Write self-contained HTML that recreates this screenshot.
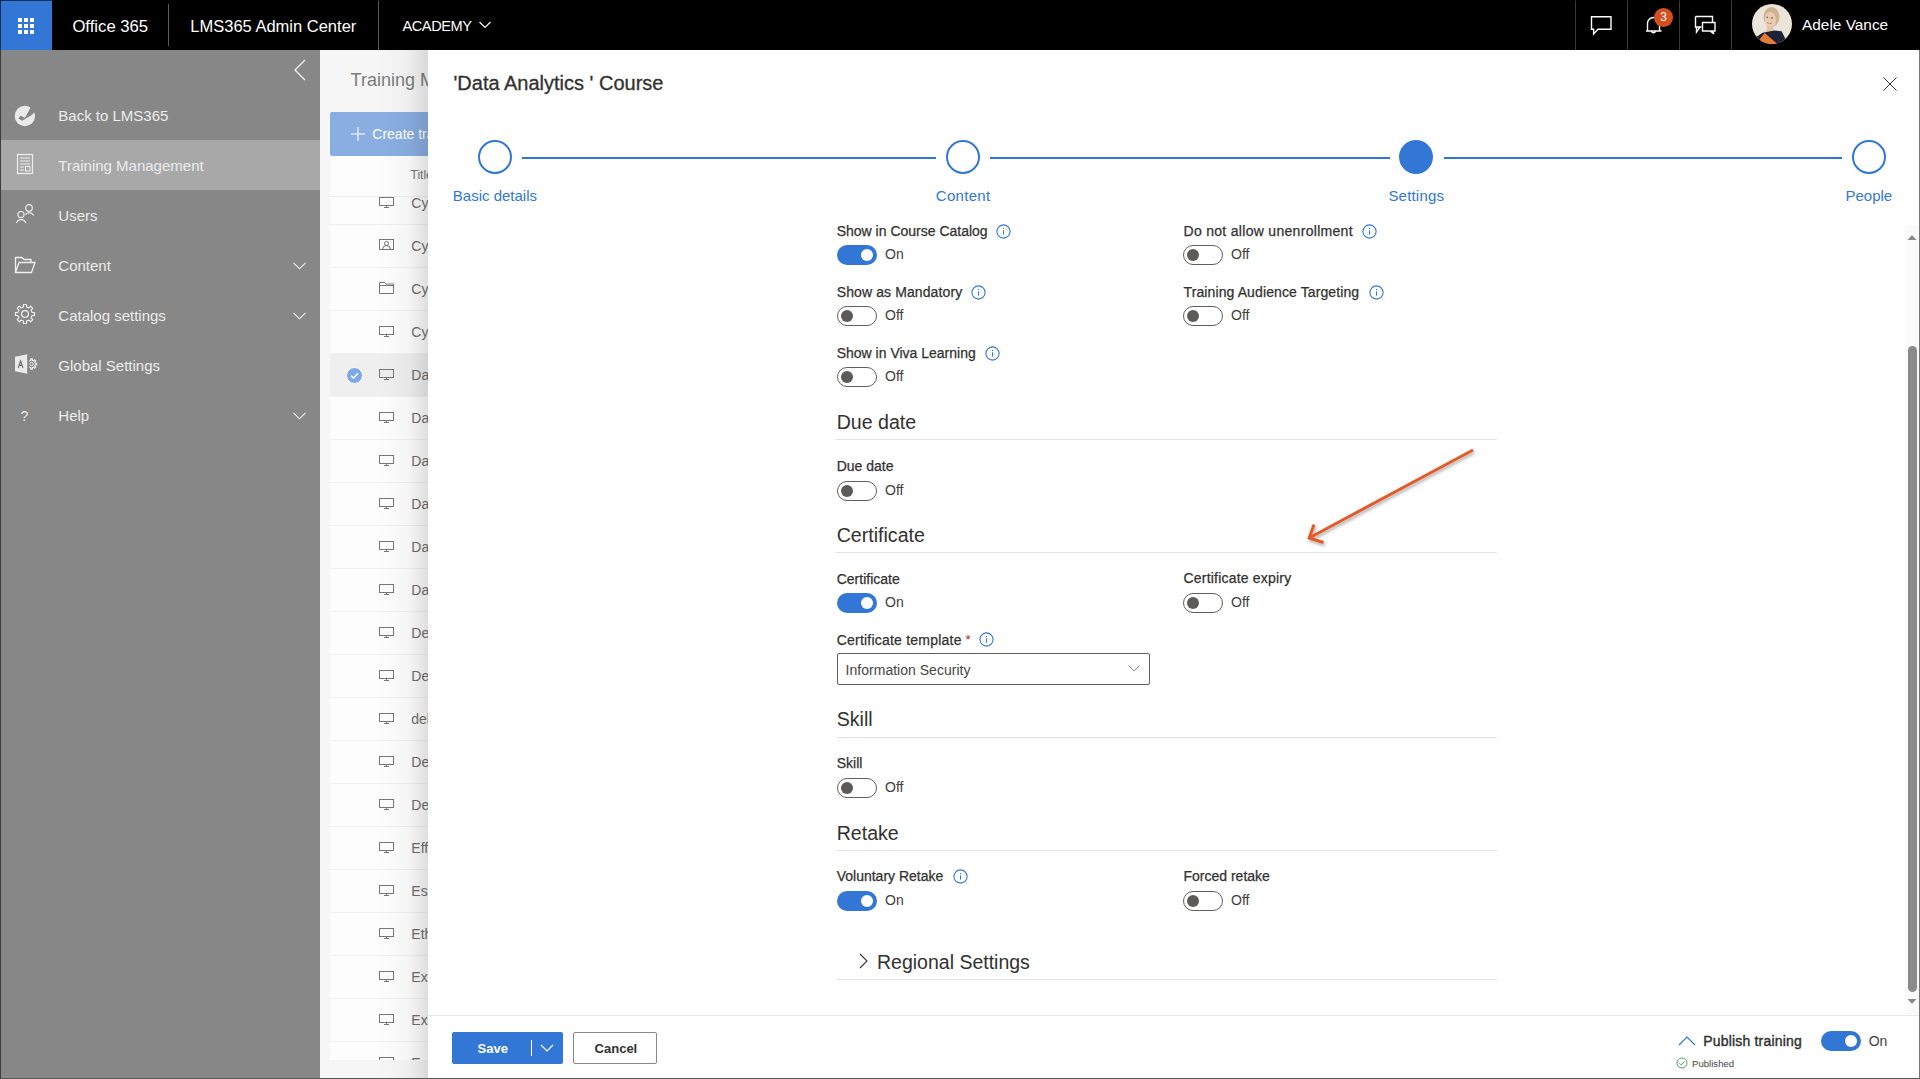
<!DOCTYPE html>
<html><head><meta charset="utf-8"><style>
html,body{margin:0;padding:0;width:1920px;height:1079px;overflow:hidden;background:#fff}
body{position:relative;font-family:"Liberation Sans",sans-serif}
.t{position:absolute;white-space:nowrap;line-height:1;font-family:"Liberation Sans",sans-serif}
</style></head><body>
<div style="position:absolute;left:0px;top:0px;width:1920px;height:50px;background:#000"></div>
<div style="position:absolute;left:0px;top:0px;width:52px;height:50px;background:#3277d5"></div>
<div style="position:absolute;left:18px;top:18px;width:4px;height:4px;background:#fff"></div>
<div style="position:absolute;left:18px;top:24px;width:4px;height:4px;background:#fff"></div>
<div style="position:absolute;left:18px;top:30px;width:4px;height:4px;background:#fff"></div>
<div style="position:absolute;left:24px;top:18px;width:4px;height:4px;background:#fff"></div>
<div style="position:absolute;left:24px;top:24px;width:4px;height:4px;background:#fff"></div>
<div style="position:absolute;left:24px;top:30px;width:4px;height:4px;background:#fff"></div>
<div style="position:absolute;left:30px;top:18px;width:4px;height:4px;background:#fff"></div>
<div style="position:absolute;left:30px;top:24px;width:4px;height:4px;background:#fff"></div>
<div style="position:absolute;left:30px;top:30px;width:4px;height:4px;background:#fff"></div>
<div class="t" style="left:72.4px;top:18.86px;font-size:16.7px;color:#fff;font-weight:normal;">Office 365</div>
<div style="position:absolute;left:168px;top:4px;width:1px;height:42px;background:#5a5a5a"></div>
<div class="t" style="left:190.3px;top:17.93px;font-size:16.5px;color:#fff;font-weight:normal;">LMS365 Admin Center</div>
<div style="position:absolute;left:378px;top:0px;width:1px;height:50px;background:#5a5a5a"></div>
<div class="t" style="left:402.5px;top:18.64px;font-size:14.6px;color:#fff;font-weight:normal;letter-spacing:-0.45px">ACADEMY</div>
<svg style="position:absolute;left:478px;top:20px" width="14" height="10"><path d="M1.5 2 L7 7.5 L12.5 2" stroke="#fff" stroke-width="1.1" fill="none"/></svg>
<div style="position:absolute;left:1575px;top:0px;width:1px;height:50px;background:#3a3a3a"></div>
<div style="position:absolute;left:1627px;top:0px;width:1px;height:50px;background:#3a3a3a"></div>
<div style="position:absolute;left:1679px;top:0px;width:1px;height:50px;background:#3a3a3a"></div>
<div style="position:absolute;left:1731px;top:0px;width:1px;height:50px;background:#3a3a3a"></div>
<svg style="position:absolute;left:1588px;top:14px" width="28" height="24"><path d="M3.5 2.7 H23 V15.3 H10 L5.6 20 V15.3 H3.5 Z" stroke="#fff" stroke-width="1.4" fill="none" stroke-linejoin="miter"/></svg>
<svg style="position:absolute;left:1643px;top:14px" width="22" height="22"><path d="M3 17 H18.5 M4.5 17 V9.5 A6 6 0 0 1 16.5 9.5 V17 M8.5 17.5 A2.2 2.2 0 0 0 12.5 17.5" stroke="#fff" stroke-width="1.4" fill="none"/></svg>
<div style="position:absolute;left:1654px;top:7.5px;width:19px;height:19px;border-radius:50%;background:#d4501f;color:#fff;font-size:12px;line-height:19px;text-align:center;font-family:Liberation Sans,sans-serif">3</div>
<svg style="position:absolute;left:1692px;top:14px" width="28" height="24"><path d="M3.5 2.5 H20.5 V8.5 M9.5 13 H3.5 V2.5 M4.5 13 V18 L8 13" stroke="#fff" stroke-width="1.4" fill="none"/><path d="M10.5 8.5 H23 V17 H20 L22 20 L18 17 H10.5 Z" stroke="#fff" stroke-width="1.4" fill="none"/></svg>
<svg style="position:absolute;left:1752px;top:4px" width="40" height="40" viewBox="0 0 40 40">
<defs><clipPath id="av"><circle cx="20" cy="20" r="20"/></clipPath><filter id="bl"><feGaussianBlur stdDeviation="0.6"/></filter></defs>
<g clip-path="url(#av)">
<rect width="40" height="40" fill="#ebe5d9"/>
<g filter="url(#bl)">
<ellipse cx="19.5" cy="13" rx="8" ry="10" fill="#cdb48e"/>
<ellipse cx="18.3" cy="16" rx="5.6" ry="8" fill="#ebccb3"/>
<path d="M15 22 L21 22 L22 28 L14 29 Z" fill="#e5c4a8"/>
<circle cx="15.2" cy="13.3" r="0.9" fill="#8a6a55"/><circle cx="20" cy="14" r="0.9" fill="#8a6a55"/><path d="M15 18.6 Q17.5 20.5 20 18.8" stroke="#b08070" stroke-width="1" fill="#f4eee8"/>
<path d="M2 40 L4.7 32.7 L10.5 28.7 L22.5 26.5 L29.6 27.3 L33.5 35 L32 40 Z" fill="#1e2235"/>
<path d="M7.8 34.9 L12.7 29.1 L24.3 38.9 L22.5 41 L9 38 Z" fill="#e97a34"/>
</g>
</g></svg>
<div class="t" style="left:1802.0px;top:17.46px;font-size:15.4px;color:#fff;font-weight:normal;">Adele Vance</div>
<div style="position:absolute;left:0px;top:50px;width:320px;height:1029px;background:#878787"></div>
<div style="position:absolute;left:0px;top:140px;width:320px;height:50px;background:#a8a8a8"></div>
<div style="position:absolute;left:0px;top:50px;width:1px;height:1029px;background:#3c3c3c"></div>
<svg style="position:absolute;left:292px;top:58px" width="16" height="26"><path d="M13 2 L3 12 L13 22" stroke="#eee" stroke-width="1.4" fill="none"/></svg>
<div class="t" style="left:58.3px;top:107.60px;font-size:15px;color:#ececec;font-weight:normal;">Back to LMS365</div>
<div class="t" style="left:58.3px;top:157.60px;font-size:15px;color:#ececec;font-weight:normal;">Training Management</div>
<div class="t" style="left:58.3px;top:207.60px;font-size:15px;color:#ececec;font-weight:normal;">Users</div>
<div class="t" style="left:58.3px;top:257.60px;font-size:15px;color:#ececec;font-weight:normal;">Content</div>
<div class="t" style="left:58.3px;top:307.60px;font-size:15px;color:#ececec;font-weight:normal;">Catalog settings</div>
<div class="t" style="left:58.3px;top:357.60px;font-size:15px;color:#ececec;font-weight:normal;">Global Settings</div>
<div class="t" style="left:58.3px;top:407.60px;font-size:15px;color:#ececec;font-weight:normal;">Help</div>
<svg style="position:absolute;left:290px;top:259px" width="18" height="12"><path d="M3.5 3.8 L9.5 9.8 L15.5 3.8" stroke="#eee" stroke-width="1.1" fill="none"/></svg>
<svg style="position:absolute;left:290px;top:309px" width="18" height="12"><path d="M3.5 3.8 L9.5 9.8 L15.5 3.8" stroke="#eee" stroke-width="1.1" fill="none"/></svg>
<svg style="position:absolute;left:290px;top:409px" width="18" height="12"><path d="M3.5 3.8 L9.5 9.8 L15.5 3.8" stroke="#eee" stroke-width="1.1" fill="none"/></svg>
<svg style="position:absolute;left:14px;top:105px" width="22" height="22"><circle cx="10.9" cy="11" r="10.2" fill="#eaeaea"/><path d="M4.4 13.4 L6.4 10.8 L11 12.7 L17.3 1.2 L22.5 5.5 L17 10.5 L8.1 15.8 Z" fill="#878787"/></svg>
<svg style="position:absolute;left:16px;top:153px" width="18" height="22"><rect x="1.5" y="1.5" width="15" height="19" stroke="#eee" stroke-width="1.2" fill="none"/><path d="M4 5 H14 M4 8 H14 M4 11 H14 M4 14 H8 M4 17 H8" stroke="#eee" stroke-width="1"/><rect x="9.5" y="13.5" width="4.5" height="4.5" stroke="#eee" stroke-width="1" fill="none"/></svg>
<svg style="position:absolute;left:14px;top:203px" width="22" height="22"><circle cx="15" cy="5" r="3.3" stroke="#eee" stroke-width="1.2" fill="none"/><path d="M11.5 11.5 A5.2 5.2 0 0 1 19.8 12.5" stroke="#eee" stroke-width="1.2" fill="none"/><circle cx="7" cy="11.6" r="3.1" stroke="#eee" stroke-width="1.2" fill="none"/><path d="M2.3 20 A5 5 0 0 1 11.8 20" stroke="#eee" stroke-width="1.2" fill="none"/></svg>
<svg style="position:absolute;left:14px;top:254px" width="22" height="22"><path d="M1.5 18.5 V3.5 H8 L10 5.5 H17 V8.5 M1.5 18.5 L5 8.5 H21 L17.5 18.5 Z" stroke="#eee" stroke-width="1.3" fill="none"/></svg>
<svg style="position:absolute;left:14px;top:303px" width="22" height="22" viewBox="0 0 22 22"><path d="M18.02 9.39 L20.48 9.50 L20.48 12.50 L18.02 12.61 L17.10 14.82 L18.77 16.64 L16.64 18.77 L14.82 17.10 L12.61 18.02 L12.50 20.48 L9.50 20.48 L9.39 18.02 L7.18 17.10 L5.36 18.77 L3.23 16.64 L4.90 14.82 L3.98 12.61 L1.52 12.50 L1.52 9.50 L3.98 9.39 L4.90 7.18 L3.23 5.36 L5.36 3.23 L7.18 4.90 L9.39 3.98 L9.50 1.52 L12.50 1.52 L12.61 3.98 L14.82 4.90 L16.64 3.23 L18.77 5.36 L17.10 7.18 Z" stroke="#eee" stroke-width="1.2" fill="none" stroke-linejoin="round"/><circle cx="11" cy="11" r="3.4" stroke="#eee" stroke-width="1.3" fill="none"/></svg>
<svg style="position:absolute;left:14px;top:353px" width="24" height="22"><path d="M1 3.8 L13.3 1.3 V20.8 L1 18.3 Z" fill="#eaeaea"/><path d="M4.3 15 L6.6 7.8 L8.9 15 M5.2 12.4 H8" stroke="#6a6a6a" stroke-width="1.1" fill="none"/><path d="M21.20 10.15 L22.64 10.19 L22.64 11.81 L21.20 11.85 L20.72 13.02 L21.71 14.06 L20.56 15.21 L19.52 14.22 L18.35 14.70 L18.31 16.14 L16.69 16.14 L16.65 14.70 L15.48 14.22 L14.44 15.21 L13.29 14.06 L14.28 13.02 L13.80 11.85 L12.36 11.81 L12.36 10.19 L13.80 10.15 L14.28 8.98 L13.29 7.94 L14.44 6.79 L15.48 7.78 L16.65 7.30 L16.69 5.86 L18.31 5.86 L18.35 7.30 L19.52 7.78 L20.56 6.79 L21.71 7.94 L20.72 8.98 Z" stroke="#eee" stroke-width="1.1" fill="none"/><circle cx="17.5" cy="11" r="1.7" stroke="#eee" stroke-width="1" fill="none"/><rect x="13.3" y="3" width="2" height="16" fill="#878787"/></svg>
<div class="t" style="left:20.5px;top:408.75px;font-size:14px;color:#ececec;font-weight:normal;">?</div>
<div style="position:absolute;left:320px;top:50px;width:108px;height:1029px;background:#f6f6f6"></div>
<div class="t" style="left:350.6px;top:70.76px;font-size:18px;color:#7b7b7b;font-weight:normal;">Training M</div>
<div style="position:absolute;left:330px;top:112px;width:110px;height:44px;background:#8aaee2;border-radius:2px"></div>
<svg style="position:absolute;left:350px;top:126px" width="16" height="16"><path d="M8 1 V15 M1 8 H15" stroke="#fff" stroke-width="1.1"/></svg>
<div class="t" style="left:372.3px;top:127.15px;font-size:14px;color:#fff;font-weight:normal;">Create training</div>
<div style="position:absolute;left:330px;top:156px;width:110px;height:904px;background:#fdfdfd"></div>
<div class="t" style="left:410.5px;top:169.34px;font-size:12px;color:#7a7a7a;font-weight:normal;">Title</div>
<div style="position:absolute;left:330px;top:196px;width:110px;height:1px;background:#ededed"></div>
<div style="position:absolute;left:330px;top:224px;width:110px;height:1px;background:#efefef"></div>
<div style="position:absolute;left:0;top:0;width:1920px;height:1060px;overflow:hidden">
<svg style="position:absolute;left:378px;top:195px" width="17" height="15"><rect x="1.5" y="2.5" width="14" height="8" stroke="#777" stroke-width="1" fill="none"/><path d="M8.5 10.5 V12 M6 12.5 H11" stroke="#777" stroke-width="1"/></svg>
<div class="t" style="left:411.3px;top:196.15px;font-size:14px;color:#6e6e6e;font-weight:normal;">Cy</div>
<div style="position:absolute;left:330px;top:267px;width:110px;height:1px;background:#f1f1f1"></div>
<svg style="position:absolute;left:378px;top:238px" width="17" height="15"><rect x="1.5" y="1.5" width="14" height="10" stroke="#777" stroke-width="1" fill="none"/><circle cx="8.5" cy="5.5" r="2" stroke="#777" stroke-width="1" fill="none"/><path d="M4.5 11.5 A4 4 0 0 1 12.5 11.5" stroke="#777" stroke-width="1" fill="none"/></svg>
<div class="t" style="left:411.3px;top:239.15px;font-size:14px;color:#6e6e6e;font-weight:normal;">Cy</div>
<div style="position:absolute;left:330px;top:310px;width:110px;height:1px;background:#f1f1f1"></div>
<svg style="position:absolute;left:378px;top:281px" width="17" height="15"><path d="M1.5 12.5 V1.5 H6.5 L8 3 H15.5 V12.5 Z M1.5 4.5 H15.5" stroke="#777" stroke-width="1" fill="none"/></svg>
<div class="t" style="left:411.3px;top:282.15px;font-size:14px;color:#6e6e6e;font-weight:normal;">Cy</div>
<div style="position:absolute;left:330px;top:353px;width:110px;height:1px;background:#f1f1f1"></div>
<svg style="position:absolute;left:378px;top:324px" width="17" height="15"><rect x="1.5" y="2.5" width="14" height="8" stroke="#777" stroke-width="1" fill="none"/><path d="M8.5 10.5 V12 M6 12.5 H11" stroke="#777" stroke-width="1"/></svg>
<div class="t" style="left:411.3px;top:325.15px;font-size:14px;color:#6e6e6e;font-weight:normal;">Cy</div>
<div style="position:absolute;left:330px;top:353px;width:110px;height:43px;background:#efefef"></div>
<svg style="position:absolute;left:346px;top:367px" width="17" height="17"><circle cx="8.5" cy="8.5" r="8" fill="#7fa8e4" stroke="#fff" stroke-width="1"/><path d="M5 8.7 L7.5 11 L12 6.3" stroke="#fff" stroke-width="1.4" fill="none"/></svg>
<div style="position:absolute;left:330px;top:396px;width:110px;height:1px;background:#f1f1f1"></div>
<svg style="position:absolute;left:378px;top:367px" width="17" height="15"><rect x="1.5" y="2.5" width="14" height="8" stroke="#777" stroke-width="1" fill="none"/><path d="M8.5 10.5 V12 M6 12.5 H11" stroke="#777" stroke-width="1"/></svg>
<div class="t" style="left:411.3px;top:368.15px;font-size:14px;color:#6e6e6e;font-weight:normal;">Da</div>
<div style="position:absolute;left:330px;top:439px;width:110px;height:1px;background:#f1f1f1"></div>
<svg style="position:absolute;left:378px;top:410px" width="17" height="15"><rect x="1.5" y="2.5" width="14" height="8" stroke="#777" stroke-width="1" fill="none"/><path d="M8.5 10.5 V12 M6 12.5 H11" stroke="#777" stroke-width="1"/></svg>
<div class="t" style="left:411.3px;top:411.15px;font-size:14px;color:#6e6e6e;font-weight:normal;">Da</div>
<div style="position:absolute;left:330px;top:482px;width:110px;height:1px;background:#f1f1f1"></div>
<svg style="position:absolute;left:378px;top:453px" width="17" height="15"><rect x="1.5" y="2.5" width="14" height="8" stroke="#777" stroke-width="1" fill="none"/><path d="M8.5 10.5 V12 M6 12.5 H11" stroke="#777" stroke-width="1"/></svg>
<div class="t" style="left:411.3px;top:454.15px;font-size:14px;color:#6e6e6e;font-weight:normal;">Da</div>
<div style="position:absolute;left:330px;top:525px;width:110px;height:1px;background:#f1f1f1"></div>
<svg style="position:absolute;left:378px;top:496px" width="17" height="15"><rect x="1.5" y="2.5" width="14" height="8" stroke="#777" stroke-width="1" fill="none"/><path d="M8.5 10.5 V12 M6 12.5 H11" stroke="#777" stroke-width="1"/></svg>
<div class="t" style="left:411.3px;top:497.15px;font-size:14px;color:#6e6e6e;font-weight:normal;">Da</div>
<div style="position:absolute;left:330px;top:568px;width:110px;height:1px;background:#f1f1f1"></div>
<svg style="position:absolute;left:378px;top:539px" width="17" height="15"><rect x="1.5" y="2.5" width="14" height="8" stroke="#777" stroke-width="1" fill="none"/><path d="M8.5 10.5 V12 M6 12.5 H11" stroke="#777" stroke-width="1"/></svg>
<div class="t" style="left:411.3px;top:540.15px;font-size:14px;color:#6e6e6e;font-weight:normal;">Da</div>
<div style="position:absolute;left:330px;top:611px;width:110px;height:1px;background:#f1f1f1"></div>
<svg style="position:absolute;left:378px;top:582px" width="17" height="15"><rect x="1.5" y="2.5" width="14" height="8" stroke="#777" stroke-width="1" fill="none"/><path d="M8.5 10.5 V12 M6 12.5 H11" stroke="#777" stroke-width="1"/></svg>
<div class="t" style="left:411.3px;top:583.15px;font-size:14px;color:#6e6e6e;font-weight:normal;">Da</div>
<div style="position:absolute;left:330px;top:654px;width:110px;height:1px;background:#f1f1f1"></div>
<svg style="position:absolute;left:378px;top:625px" width="17" height="15"><rect x="1.5" y="2.5" width="14" height="8" stroke="#777" stroke-width="1" fill="none"/><path d="M8.5 10.5 V12 M6 12.5 H11" stroke="#777" stroke-width="1"/></svg>
<div class="t" style="left:411.3px;top:626.15px;font-size:14px;color:#6e6e6e;font-weight:normal;">De</div>
<div style="position:absolute;left:330px;top:697px;width:110px;height:1px;background:#f1f1f1"></div>
<svg style="position:absolute;left:378px;top:668px" width="17" height="15"><rect x="1.5" y="2.5" width="14" height="8" stroke="#777" stroke-width="1" fill="none"/><path d="M8.5 10.5 V12 M6 12.5 H11" stroke="#777" stroke-width="1"/></svg>
<div class="t" style="left:411.3px;top:669.15px;font-size:14px;color:#6e6e6e;font-weight:normal;">De</div>
<div style="position:absolute;left:330px;top:740px;width:110px;height:1px;background:#f1f1f1"></div>
<svg style="position:absolute;left:378px;top:711px" width="17" height="15"><rect x="1.5" y="2.5" width="14" height="8" stroke="#777" stroke-width="1" fill="none"/><path d="M8.5 10.5 V12 M6 12.5 H11" stroke="#777" stroke-width="1"/></svg>
<div class="t" style="left:411.3px;top:712.15px;font-size:14px;color:#6e6e6e;font-weight:normal;">del</div>
<div style="position:absolute;left:330px;top:783px;width:110px;height:1px;background:#f1f1f1"></div>
<svg style="position:absolute;left:378px;top:754px" width="17" height="15"><rect x="1.5" y="2.5" width="14" height="8" stroke="#777" stroke-width="1" fill="none"/><path d="M8.5 10.5 V12 M6 12.5 H11" stroke="#777" stroke-width="1"/></svg>
<div class="t" style="left:411.3px;top:755.15px;font-size:14px;color:#6e6e6e;font-weight:normal;">De</div>
<div style="position:absolute;left:330px;top:826px;width:110px;height:1px;background:#f1f1f1"></div>
<svg style="position:absolute;left:378px;top:797px" width="17" height="15"><rect x="1.5" y="2.5" width="14" height="8" stroke="#777" stroke-width="1" fill="none"/><path d="M8.5 10.5 V12 M6 12.5 H11" stroke="#777" stroke-width="1"/></svg>
<div class="t" style="left:411.3px;top:798.15px;font-size:14px;color:#6e6e6e;font-weight:normal;">De</div>
<div style="position:absolute;left:330px;top:869px;width:110px;height:1px;background:#f1f1f1"></div>
<svg style="position:absolute;left:378px;top:840px" width="17" height="15"><rect x="1.5" y="2.5" width="14" height="8" stroke="#777" stroke-width="1" fill="none"/><path d="M8.5 10.5 V12 M6 12.5 H11" stroke="#777" stroke-width="1"/></svg>
<div class="t" style="left:411.3px;top:841.15px;font-size:14px;color:#6e6e6e;font-weight:normal;">Eff</div>
<div style="position:absolute;left:330px;top:912px;width:110px;height:1px;background:#f1f1f1"></div>
<svg style="position:absolute;left:378px;top:883px" width="17" height="15"><rect x="1.5" y="2.5" width="14" height="8" stroke="#777" stroke-width="1" fill="none"/><path d="M8.5 10.5 V12 M6 12.5 H11" stroke="#777" stroke-width="1"/></svg>
<div class="t" style="left:411.3px;top:884.15px;font-size:14px;color:#6e6e6e;font-weight:normal;">Ess</div>
<div style="position:absolute;left:330px;top:955px;width:110px;height:1px;background:#f1f1f1"></div>
<svg style="position:absolute;left:378px;top:926px" width="17" height="15"><rect x="1.5" y="2.5" width="14" height="8" stroke="#777" stroke-width="1" fill="none"/><path d="M8.5 10.5 V12 M6 12.5 H11" stroke="#777" stroke-width="1"/></svg>
<div class="t" style="left:411.3px;top:927.15px;font-size:14px;color:#6e6e6e;font-weight:normal;">Eth</div>
<div style="position:absolute;left:330px;top:998px;width:110px;height:1px;background:#f1f1f1"></div>
<svg style="position:absolute;left:378px;top:969px" width="17" height="15"><rect x="1.5" y="2.5" width="14" height="8" stroke="#777" stroke-width="1" fill="none"/><path d="M8.5 10.5 V12 M6 12.5 H11" stroke="#777" stroke-width="1"/></svg>
<div class="t" style="left:411.3px;top:970.15px;font-size:14px;color:#6e6e6e;font-weight:normal;">Exc</div>
<div style="position:absolute;left:330px;top:1041px;width:110px;height:1px;background:#f1f1f1"></div>
<svg style="position:absolute;left:378px;top:1012px" width="17" height="15"><rect x="1.5" y="2.5" width="14" height="8" stroke="#777" stroke-width="1" fill="none"/><path d="M8.5 10.5 V12 M6 12.5 H11" stroke="#777" stroke-width="1"/></svg>
<div class="t" style="left:411.3px;top:1013.15px;font-size:14px;color:#6e6e6e;font-weight:normal;">Exc</div>
<div style="position:absolute;left:330px;top:1084px;width:110px;height:1px;background:#f1f1f1"></div>
<svg style="position:absolute;left:378px;top:1055px" width="17" height="15"><rect x="1.5" y="2.5" width="14" height="8" stroke="#777" stroke-width="1" fill="none"/><path d="M8.5 10.5 V12 M6 12.5 H11" stroke="#777" stroke-width="1"/></svg>
<div class="t" style="left:411.3px;top:1056.15px;font-size:14px;color:#6e6e6e;font-weight:normal;">Exc</div>
</div>
<div style="position:absolute;left:330px;top:1060px;width:110px;height:19px;background:#f6f6f6"></div>
<div style="position:absolute;left:380px;top:50px;width:48px;height:1029px;background:linear-gradient(90deg,rgba(0,0,0,0) 0%,rgba(0,0,0,0.03) 60%,rgba(0,0,0,0.12) 100%)"></div>
<div style="position:absolute;left:428px;top:50px;width:1492px;height:1029px;background:#fff"></div>
<div class="t" style="left:453.5px;top:73.07px;font-size:20px;color:#323130;font-weight:normal;-webkit-text-stroke:0.3px #323130">'Data Analytics ' Course</div>
<svg style="position:absolute;left:1882px;top:76px" width="16" height="16"><path d="M1.5 1.5 L14.5 14.5 M14.5 1.5 L1.5 14.5" stroke="#323130" stroke-width="1"/></svg>
<div style="position:absolute;left:478px;top:140px;width:34px;height:34px;border-radius:50%;border:2px solid #3277d5;box-sizing:border-box"></div>
<div style="position:absolute;left:946px;top:140px;width:34px;height:34px;border-radius:50%;border:2px solid #3277d5;box-sizing:border-box"></div>
<div style="position:absolute;left:1399.4px;top:140px;width:34px;height:34px;border-radius:50%;background:#3277d5"></div>
<div style="position:absolute;left:1852.1px;top:140px;width:34px;height:34px;border-radius:50%;border:2px solid #3277d5;box-sizing:border-box"></div>
<div style="position:absolute;left:522px;top:157px;width:414px;height:2px;background:#3277d5"></div>
<div style="position:absolute;left:990px;top:157px;width:400px;height:2px;background:#3277d5"></div>
<div style="position:absolute;left:1444px;top:157px;width:398px;height:2px;background:#3277d5"></div>
<div class="t" style="left:452.8px;top:188.10px;font-size:15px;color:#3277d5;font-weight:normal;">Basic details</div>
<div class="t" style="left:935.8px;top:188.10px;font-size:15px;color:#3277d5;font-weight:normal;letter-spacing:0.3px">Content</div>
<div class="t" style="left:1388.4px;top:188.10px;font-size:15px;color:#3277d5;font-weight:normal;letter-spacing:0.2px">Settings</div>
<div class="t" style="left:1845.5px;top:188.10px;font-size:15px;color:#3277d5;font-weight:normal;">People</div>
<div class="t" style="left:836.7px;top:224.35px;font-size:14px;color:#323130;font-weight:normal;-webkit-text-stroke:0.25px #323130;letter-spacing:0px">Show in Course Catalog</div>
<svg style="position:absolute;left:994.6px;top:223.4px" width="17" height="17"><circle cx="8.5" cy="8.5" r="6.6" stroke="#3277d5" stroke-width="1.1" fill="none"/><path d="M8.5 7.3 V11.6" stroke="#3277d5" stroke-width="1.1"/><circle cx="8.5" cy="5.4" r="0.6" fill="#3277d5"/></svg>
<div style="position:absolute;left:837px;top:245px;width:40px;height:20px;border-radius:10px;background:#3277d5"></div>
<div style="position:absolute;left:861px;top:249px;width:12px;height:12px;border-radius:50%;background:#fff"></div>
<div class="t" style="left:885.0px;top:247.35px;font-size:14px;color:#3f3e3d;font-weight:normal;">On</div>
<div class="t" style="left:1183.5px;top:224.35px;font-size:14px;color:#323130;font-weight:normal;-webkit-text-stroke:0.25px #323130;letter-spacing:0.3px">Do not allow unenrollment</div>
<svg style="position:absolute;left:1360.8000000000002px;top:223.4px" width="17" height="17"><circle cx="8.5" cy="8.5" r="6.6" stroke="#3277d5" stroke-width="1.1" fill="none"/><path d="M8.5 7.3 V11.6" stroke="#3277d5" stroke-width="1.1"/><circle cx="8.5" cy="5.4" r="0.6" fill="#3277d5"/></svg>
<div style="position:absolute;left:1183px;top:245px;width:40px;height:20px;border-radius:10px;border:1px solid #605e5c;box-sizing:border-box;background:#fff"></div>
<div style="position:absolute;left:1187px;top:249px;width:12px;height:12px;border-radius:50%;background:#5c5b59"></div>
<div class="t" style="left:1231.0px;top:247.35px;font-size:14px;color:#3f3e3d;font-weight:normal;">Off</div>
<div class="t" style="left:836.7px;top:285.15px;font-size:14px;color:#323130;font-weight:normal;-webkit-text-stroke:0.25px #323130;letter-spacing:0.11px">Show as Mandatory</div>
<svg style="position:absolute;left:969.8px;top:284.0px" width="17" height="17"><circle cx="8.5" cy="8.5" r="6.6" stroke="#3277d5" stroke-width="1.1" fill="none"/><path d="M8.5 7.3 V11.6" stroke="#3277d5" stroke-width="1.1"/><circle cx="8.5" cy="5.4" r="0.6" fill="#3277d5"/></svg>
<div style="position:absolute;left:837px;top:306px;width:40px;height:20px;border-radius:10px;border:1px solid #605e5c;box-sizing:border-box;background:#fff"></div>
<div style="position:absolute;left:841px;top:310px;width:12px;height:12px;border-radius:50%;background:#5c5b59"></div>
<div class="t" style="left:885.0px;top:308.35px;font-size:14px;color:#3f3e3d;font-weight:normal;">Off</div>
<div class="t" style="left:1183.5px;top:285.15px;font-size:14px;color:#323130;font-weight:normal;-webkit-text-stroke:0.25px #323130;letter-spacing:0.11px">Training Audience Targeting</div>
<svg style="position:absolute;left:1368.1000000000001px;top:284.0px" width="17" height="17"><circle cx="8.5" cy="8.5" r="6.6" stroke="#3277d5" stroke-width="1.1" fill="none"/><path d="M8.5 7.3 V11.6" stroke="#3277d5" stroke-width="1.1"/><circle cx="8.5" cy="5.4" r="0.6" fill="#3277d5"/></svg>
<div style="position:absolute;left:1183px;top:306px;width:40px;height:20px;border-radius:10px;border:1px solid #605e5c;box-sizing:border-box;background:#fff"></div>
<div style="position:absolute;left:1187px;top:310px;width:12px;height:12px;border-radius:50%;background:#5c5b59"></div>
<div class="t" style="left:1231.0px;top:308.35px;font-size:14px;color:#3f3e3d;font-weight:normal;">Off</div>
<div class="t" style="left:836.7px;top:345.65px;font-size:14px;color:#323130;font-weight:normal;-webkit-text-stroke:0.25px #323130;letter-spacing:0px">Show in Viva Learning</div>
<svg style="position:absolute;left:984.0px;top:344.5px" width="17" height="17"><circle cx="8.5" cy="8.5" r="6.6" stroke="#3277d5" stroke-width="1.1" fill="none"/><path d="M8.5 7.3 V11.6" stroke="#3277d5" stroke-width="1.1"/><circle cx="8.5" cy="5.4" r="0.6" fill="#3277d5"/></svg>
<div style="position:absolute;left:837px;top:367px;width:40px;height:20px;border-radius:10px;border:1px solid #605e5c;box-sizing:border-box;background:#fff"></div>
<div style="position:absolute;left:841px;top:371px;width:12px;height:12px;border-radius:50%;background:#5c5b59"></div>
<div class="t" style="left:885.0px;top:369.35px;font-size:14px;color:#3f3e3d;font-weight:normal;">Off</div>
<div class="t" style="left:836.7px;top:412.61px;font-size:19.6px;color:#323130;font-weight:normal;">Due date</div>
<div style="position:absolute;left:836px;top:439px;width:661px;height:1px;background:#e6e4e2"></div>
<div class="t" style="left:836.7px;top:459.05px;font-size:14px;color:#323130;font-weight:normal;-webkit-text-stroke:0.25px #323130;letter-spacing:0px">Due date</div>
<div style="position:absolute;left:837px;top:480.5px;width:40px;height:20px;border-radius:10px;border:1px solid #605e5c;box-sizing:border-box;background:#fff"></div>
<div style="position:absolute;left:841px;top:484.5px;width:12px;height:12px;border-radius:50%;background:#5c5b59"></div>
<div class="t" style="left:885.0px;top:482.85px;font-size:14px;color:#3f3e3d;font-weight:normal;">Off</div>
<div class="t" style="left:836.7px;top:525.71px;font-size:19.6px;color:#323130;font-weight:normal;">Certificate</div>
<div style="position:absolute;left:836px;top:552px;width:661px;height:1px;background:#e6e4e2"></div>
<div class="t" style="left:836.7px;top:571.65px;font-size:14px;color:#323130;font-weight:normal;-webkit-text-stroke:0.25px #323130;letter-spacing:0px">Certificate</div>
<div style="position:absolute;left:837px;top:593px;width:40px;height:20px;border-radius:10px;background:#3277d5"></div>
<div style="position:absolute;left:861px;top:597px;width:12px;height:12px;border-radius:50%;background:#fff"></div>
<div class="t" style="left:885.0px;top:595.35px;font-size:14px;color:#3f3e3d;font-weight:normal;">On</div>
<div class="t" style="left:1183.5px;top:571.45px;font-size:14px;color:#323130;font-weight:normal;-webkit-text-stroke:0.25px #323130;letter-spacing:0.2px">Certificate expiry</div>
<div style="position:absolute;left:1183px;top:593px;width:40px;height:20px;border-radius:10px;border:1px solid #605e5c;box-sizing:border-box;background:#fff"></div>
<div style="position:absolute;left:1187px;top:597px;width:12px;height:12px;border-radius:50%;background:#5c5b59"></div>
<div class="t" style="left:1231.0px;top:595.35px;font-size:14px;color:#3f3e3d;font-weight:normal;">Off</div>
<div class="t" style="left:836.7px;top:632.75px;font-size:14px;color:#323130;font-weight:normal;-webkit-text-stroke:0.25px #323130;letter-spacing:0.22px">Certificate template</div>
<div class="t" style="left:965.5px;top:632.50px;font-size:13px;color:#a4262c;font-weight:normal;">*</div>
<svg style="position:absolute;left:978.4px;top:630.7px" width="17" height="17"><circle cx="8.5" cy="8.5" r="6.6" stroke="#3277d5" stroke-width="1.1" fill="none"/><path d="M8.5 7.3 V11.6" stroke="#3277d5" stroke-width="1.1"/><circle cx="8.5" cy="5.4" r="0.6" fill="#3277d5"/></svg>
<div style="position:absolute;left:837px;top:653px;width:313px;height:32px;border:1px solid #605e5c;box-sizing:border-box;border-radius:2px;background:#fff"></div>
<div class="t" style="left:845.6px;top:663.15px;font-size:14px;color:#484644;font-weight:normal;letter-spacing:0.02px">Information Security</div>
<svg style="position:absolute;left:1126px;top:662px" width="16" height="12"><path d="M2.5 3.5 L8 9 L13.5 3.5" stroke="#8a8886" stroke-width="1" fill="none"/></svg>
<div class="t" style="left:836.7px;top:710.41px;font-size:19.6px;color:#323130;font-weight:normal;">Skill</div>
<div style="position:absolute;left:836px;top:737px;width:661px;height:1px;background:#e6e4e2"></div>
<div class="t" style="left:836.7px;top:756.15px;font-size:14px;color:#323130;font-weight:normal;-webkit-text-stroke:0.25px #323130;letter-spacing:0px">Skill</div>
<div style="position:absolute;left:837px;top:778px;width:40px;height:20px;border-radius:10px;border:1px solid #605e5c;box-sizing:border-box;background:#fff"></div>
<div style="position:absolute;left:841px;top:782px;width:12px;height:12px;border-radius:50%;background:#5c5b59"></div>
<div class="t" style="left:885.0px;top:780.35px;font-size:14px;color:#3f3e3d;font-weight:normal;">Off</div>
<div class="t" style="left:836.7px;top:823.81px;font-size:19.6px;color:#323130;font-weight:normal;">Retake</div>
<div style="position:absolute;left:836px;top:850px;width:661px;height:1px;background:#e6e4e2"></div>
<div class="t" style="left:836.7px;top:869.35px;font-size:14px;color:#323130;font-weight:normal;-webkit-text-stroke:0.25px #323130;letter-spacing:0px">Voluntary Retake</div>
<svg style="position:absolute;left:952.4px;top:868.0px" width="17" height="17"><circle cx="8.5" cy="8.5" r="6.6" stroke="#3277d5" stroke-width="1.1" fill="none"/><path d="M8.5 7.3 V11.6" stroke="#3277d5" stroke-width="1.1"/><circle cx="8.5" cy="5.4" r="0.6" fill="#3277d5"/></svg>
<div style="position:absolute;left:837px;top:891px;width:40px;height:20px;border-radius:10px;background:#3277d5"></div>
<div style="position:absolute;left:861px;top:895px;width:12px;height:12px;border-radius:50%;background:#fff"></div>
<div class="t" style="left:885.0px;top:893.35px;font-size:14px;color:#3f3e3d;font-weight:normal;">On</div>
<div class="t" style="left:1183.5px;top:869.35px;font-size:14px;color:#323130;font-weight:normal;-webkit-text-stroke:0.25px #323130;letter-spacing:0px">Forced retake</div>
<div style="position:absolute;left:1183px;top:891px;width:40px;height:20px;border-radius:10px;border:1px solid #605e5c;box-sizing:border-box;background:#fff"></div>
<div style="position:absolute;left:1187px;top:895px;width:12px;height:12px;border-radius:50%;background:#5c5b59"></div>
<div class="t" style="left:1231.0px;top:893.35px;font-size:14px;color:#3f3e3d;font-weight:normal;">Off</div>
<svg style="position:absolute;left:856px;top:952px" width="14" height="18"><path d="M4 2 L11 9 L4 16" stroke="#323130" stroke-width="1.1" fill="none"/></svg>
<div class="t" style="left:877.0px;top:953.49px;font-size:19.5px;color:#323130;font-weight:normal;">Regional Settings</div>
<div style="position:absolute;left:836px;top:979px;width:661px;height:1px;background:#e6e4e2"></div>
<svg style="position:absolute;left:1290px;top:435px" width="200" height="120" viewBox="1290 435 200 120"><defs><filter id="sh" x="-10%" y="-10%" width="120%" height="130%"><feDropShadow dx="1.2" dy="2.2" stdDeviation="1.5" flood-color="#000" flood-opacity="0.32"/></filter></defs><g filter="url(#sh)" stroke="#e35a2a" stroke-width="3" fill="none" stroke-linecap="butt"><path d="M1473 450 L1310 537.5"/><path d="M1314 524.5 L1309.2 538 L1323.5 542.5"/></g></svg>
<div style="position:absolute;left:1905px;top:225px;width:14px;height:790px;background:#fafafa"></div>
<svg style="position:absolute;left:1906px;top:233px" width="12" height="8"><path d="M1.5 7 L6 2 L10.5 7 Z" fill="#8a8a8a"/></svg>
<div style="position:absolute;left:1908px;top:346px;width:9px;height:646px;background:#8a8a8a;border-radius:5px"></div>
<svg style="position:absolute;left:1906px;top:998px" width="12" height="8"><path d="M1.5 1 L6 6 L10.5 1 Z" fill="#8a8a8a"/></svg>
<div style="position:absolute;left:428px;top:1015px;width:1491px;height:1px;background:#e8e8e8"></div>
<div style="position:absolute;left:452px;top:1032px;width:111px;height:32px;border-radius:2px;background:#3277d5"></div>
<div class="t" style="left:477.6px;top:1041.80px;font-size:13px;color:#fff;font-weight:bold;">Save</div>
<div style="position:absolute;left:531px;top:1040px;width:1px;height:16px;background:#fff"></div>
<svg style="position:absolute;left:539px;top:1042px" width="16" height="12"><path d="M2 3 L8 9 L14 3" stroke="#fff" stroke-width="1.2" fill="none"/></svg>
<div style="position:absolute;left:573px;top:1032px;width:84px;height:32px;border-radius:2px;border:1px solid #8a8886;box-sizing:border-box;background:#fff"></div>
<div class="t" style="left:594.6px;top:1041.80px;font-size:13px;color:#323130;font-weight:bold;">Cancel</div>
<svg style="position:absolute;left:1677px;top:1034px" width="20" height="14"><path d="M2 11 L10 3 L18 11" stroke="#3277d5" stroke-width="1.2" fill="none"/></svg>
<div class="t" style="left:1703.3px;top:1034.15px;font-size:14px;color:#323130;font-weight:normal;-webkit-text-stroke:0.4px #323130;letter-spacing:0.18px">Publish training</div>
<div style="position:absolute;left:1821px;top:1031px;width:40px;height:20px;border-radius:10px;background:#3277d5"></div>
<div style="position:absolute;left:1845px;top:1035px;width:12px;height:12px;border-radius:50%;background:#fff"></div>
<div class="t" style="left:1868.7px;top:1034.35px;font-size:14px;color:#3f3e3d;font-weight:normal;">On</div>
<svg style="position:absolute;left:1676px;top:1057px" width="12" height="12"><circle cx="6" cy="6" r="5" stroke="#57a55a" stroke-width="1" fill="none"/><path d="M3.5 6.2 L5.3 8 L8.6 4.3" stroke="#57a55a" stroke-width="1" fill="none"/></svg>
<div class="t" style="left:1692.0px;top:1058.87px;font-size:9.6px;color:#444;font-weight:normal;">Published</div>
<div style="position:absolute;left:1919px;top:50px;width:1px;height:1029px;background:#777"></div>
<div style="position:absolute;left:0px;top:1078px;width:1920px;height:1px;background:#555"></div>
<div style="position:absolute;left:0px;top:0px;width:1920px;height:1px;background:rgba(0,0,0,0.6)"></div>
<div style="position:absolute;left:0px;top:0px;width:1px;height:50px;background:rgba(0,0,0,0.6)"></div>
</body></html>
